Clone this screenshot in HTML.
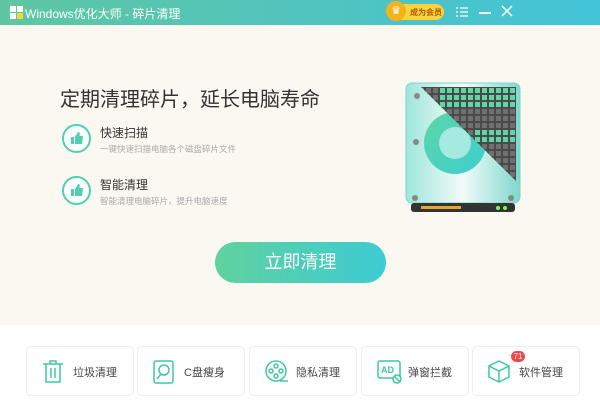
<!DOCTYPE html><html><head><meta charset="utf-8"><style>
*{margin:0;padding:0;box-sizing:border-box}
body{width:600px;height:413px;overflow:hidden;font-family:"Liberation Sans","Noto Sans CJK SC",sans-serif;background:#fff;position:relative}
.bar{position:absolute;left:0;top:0;width:600px;height:25px;background:linear-gradient(90deg,#60c6a2,#42c3d8);color:#fff;font-size:12px}
.main{position:absolute;top:25px;left:0;width:600px;height:300px;background:#fbf8f2}
.abs{position:absolute}
.circ{position:absolute;width:29px;height:29px;border:2px solid #4fd0ae;border-radius:50%;background:#fff}
.circ svg{position:absolute;left:6px;top:5px}
.t{position:absolute;font-size:12px;color:#333}
.s{position:absolute;font-size:8.5px;color:#aaa}
.card{position:absolute;top:346px;width:108px;height:50px;border:1px solid #eee;border-radius:5px;background:#fff}
.card span{position:absolute;left:46px;top:17px;font-size:11px;color:#444}
.card svg{position:absolute;left:14px;top:12px}
</style></head><body>
<div class="bar">
<div class="abs" style="left:10px;top:6px;width:6px;height:6px;background:#fff"></div>
<div class="abs" style="left:17px;top:6px;width:6px;height:6px;background:#fff"></div>
<div class="abs" style="left:10px;top:13px;width:6px;height:6px;background:#fff"></div>
<div class="abs" style="left:17px;top:13px;width:6px;height:6px;background:#f5d53b"></div>
<div class="abs" style="left:25px;top:5px;font-size:12px">Windows优化大师 - 碎片清理</div>
<div class="abs" style="left:388px;top:4px;width:56px;height:16px;border-radius:8px;background:#fbd33a;color:#b35a00;font-size:8px;font-weight:bold;padding:3px 0 0 22px">成为会员</div>
<div class="abs" style="left:386px;top:1px;width:20px;height:20px;border-radius:50%;background:#f6b21c;color:#fff;font-size:11px;text-align:center;line-height:20px">♛</div>
<svg class="abs" style="left:456px;top:6px" width="12" height="12"><g stroke="#fff" stroke-width="1.3"><path d="M0 2h2M4 2h8M0 6h2M4 6h8M0 10h2M4 10h8"/></g></svg>
<div class="abs" style="left:479px;top:12px;width:12px;height:1.5px;background:#fff"></div>
<svg class="abs" style="left:501px;top:5px" width="12" height="12"><path d="M1 1l10 10M11 1L1 11" stroke="#fff" stroke-width="1.5"/></svg>
</div>
<div class="main"></div>
<div class="abs" style="left:60px;top:83px;font-size:20px;color:#333">定期清理碎片，延长电脑寿命</div>
<div class="circ" style="left:62px;top:124px"><svg width="14" height="14"><path d="M1 6h3v7H1zM5 6l3-5c2 0 2 1 1.5 4H13l-1 8H5z" fill="#4fd0ae"/></svg></div>
<div class="t" style="left:100px;top:124px">快速扫描</div>
<div class="s" style="left:100px;top:143px">一键快速扫描电脑各个磁盘碎片文件</div>
<div class="circ" style="left:62px;top:176px"><svg width="14" height="14"><path d="M1 6h3v7H1zM5 6l3-5c2 0 2 1 1.5 4H13l-1 8H5z" fill="#4fd0ae"/></svg></div>
<div class="t" style="left:100px;top:176px">智能清理</div>
<div class="s" style="left:100px;top:195px">智能清理电脑碎片，提升电脑速度</div>
<svg class="abs" style="left:403px;top:80px" width="120" height="136">
<defs><linearGradient id="g" x1="0" x2="1"><stop offset="0" stop-color="#9fe6da"/><stop offset=".5" stop-color="#f2fbfa"/><stop offset="1" stop-color="#7ed8cc"/></linearGradient>
<linearGradient id="r" x1="0" x2="1" y1="0" y2="1"><stop offset="0" stop-color="#5ed6a6"/><stop offset="1" stop-color="#3ccfd0"/></linearGradient>
<pattern id="p" width="7" height="7" patternUnits="userSpaceOnUse" x="1" y="0"><rect width="7" height="7" fill="#4a4a4a"/><rect x="1" y="1" width="5" height="5" fill="#707070"/></pattern>
<pattern id="q" width="7" height="7" patternUnits="userSpaceOnUse" x="1" y="0"><rect width="7" height="7" fill="#4a4a4a"/><rect x="1" y="1" width="5" height="5" fill="#5ed6a6"/></pattern>
<clipPath id="c"><polygon points="18,7 113,7 113,101"/></clipPath></defs>
<rect x="3" y="3" width="114" height="120" rx="6" fill="url(#g)" stroke="#7fd6ca"/>
<circle cx="52" cy="63" r="31" fill="url(#r)"/><circle cx="52" cy="63" r="16" fill="#a6e9e1"/>
<g clip-path="url(#c)"><rect x="18" y="7" width="95" height="95" fill="url(#p)"/><rect x="36" y="7" width="77" height="21" fill="url(#q)"/><rect x="71" y="49" width="42" height="14" fill="url(#q)"/></g>
<circle cx="14" cy="16" r="3" fill="#888"/><circle cx="13" cy="62" r="3" fill="#888"/><circle cx="12" cy="118" r="3" fill="#888"/><circle cx="108" cy="118" r="3" fill="#888"/>
<rect x="8" y="123" width="104" height="9" rx="3" fill="#333"/>
<rect x="18" y="126" width="40" height="3" fill="#e0a830"/>
<circle cx="95" cy="128" r="2" fill="#7f4"/><circle cx="102" cy="128" r="2" fill="#7f4"/>
</svg>
<div class="abs" style="left:215px;top:242px;width:171px;height:41px;border-radius:21px;background:linear-gradient(90deg,#5fd29e,#3ecbd4);color:#fff;font-size:18px;text-align:center;line-height:41px">立即清理</div>
<div class="card" style="left:26px"><svg width="26" height="26" fill="none" stroke="#3ec9a0" stroke-width="1.5"><path d="M2 5h20M9 5V2h6v3M5 5v18h14V5M10 9v10M14 9v10"/></svg><span>垃圾清理</span></div>
<div class="card" style="left:137px"><svg width="26" height="26" fill="none" stroke="#3ec9a0" stroke-width="1.5"><rect x="2" y="2" width="19" height="22" rx="2"/><circle cx="12" cy="11" r="5"/><path d="M9 15l-4 5"/></svg><span>C盘瘦身</span></div>
<div class="card" style="left:249px"><svg width="26" height="26" fill="none" stroke="#3ec9a0" stroke-width="1.5"><circle cx="12" cy="12" r="10"/><circle cx="12" cy="7" r="2"/><circle cx="12" cy="17" r="2"/><circle cx="7" cy="12" r="2"/><circle cx="17" cy="12" r="2"/><path d="M16 22h8"/></svg><span>隐私清理</span></div>
<div class="card" style="left:361px"><svg width="28" height="26" fill="none" stroke="#3ec9a0" stroke-width="1.5"><rect x="2" y="2" width="22" height="17" rx="2"/><text x="5" y="14" font-size="9" fill="#3ec9a0" stroke="none" font-weight="bold">AD</text><circle cx="21" cy="20" r="4" fill="#fff"/><path d="M18 17l6 6"/></svg><span>弹窗拦截</span></div>
<div class="card" style="left:472px"><svg width="26" height="26" fill="none" stroke="#3ec9a0" stroke-width="1.5"><path d="M12 2l10 5v11l-10 5-10-5V7zM2 7l10 5 10-5M12 12v11"/></svg><span>软件管理</span>
<div class="abs" style="left:38px;top:4px;width:14px;height:11px;border-radius:6px;background:#f04848;color:#fff;font-size:8px;text-align:center;line-height:11px">71</div></div>
</body></html>
